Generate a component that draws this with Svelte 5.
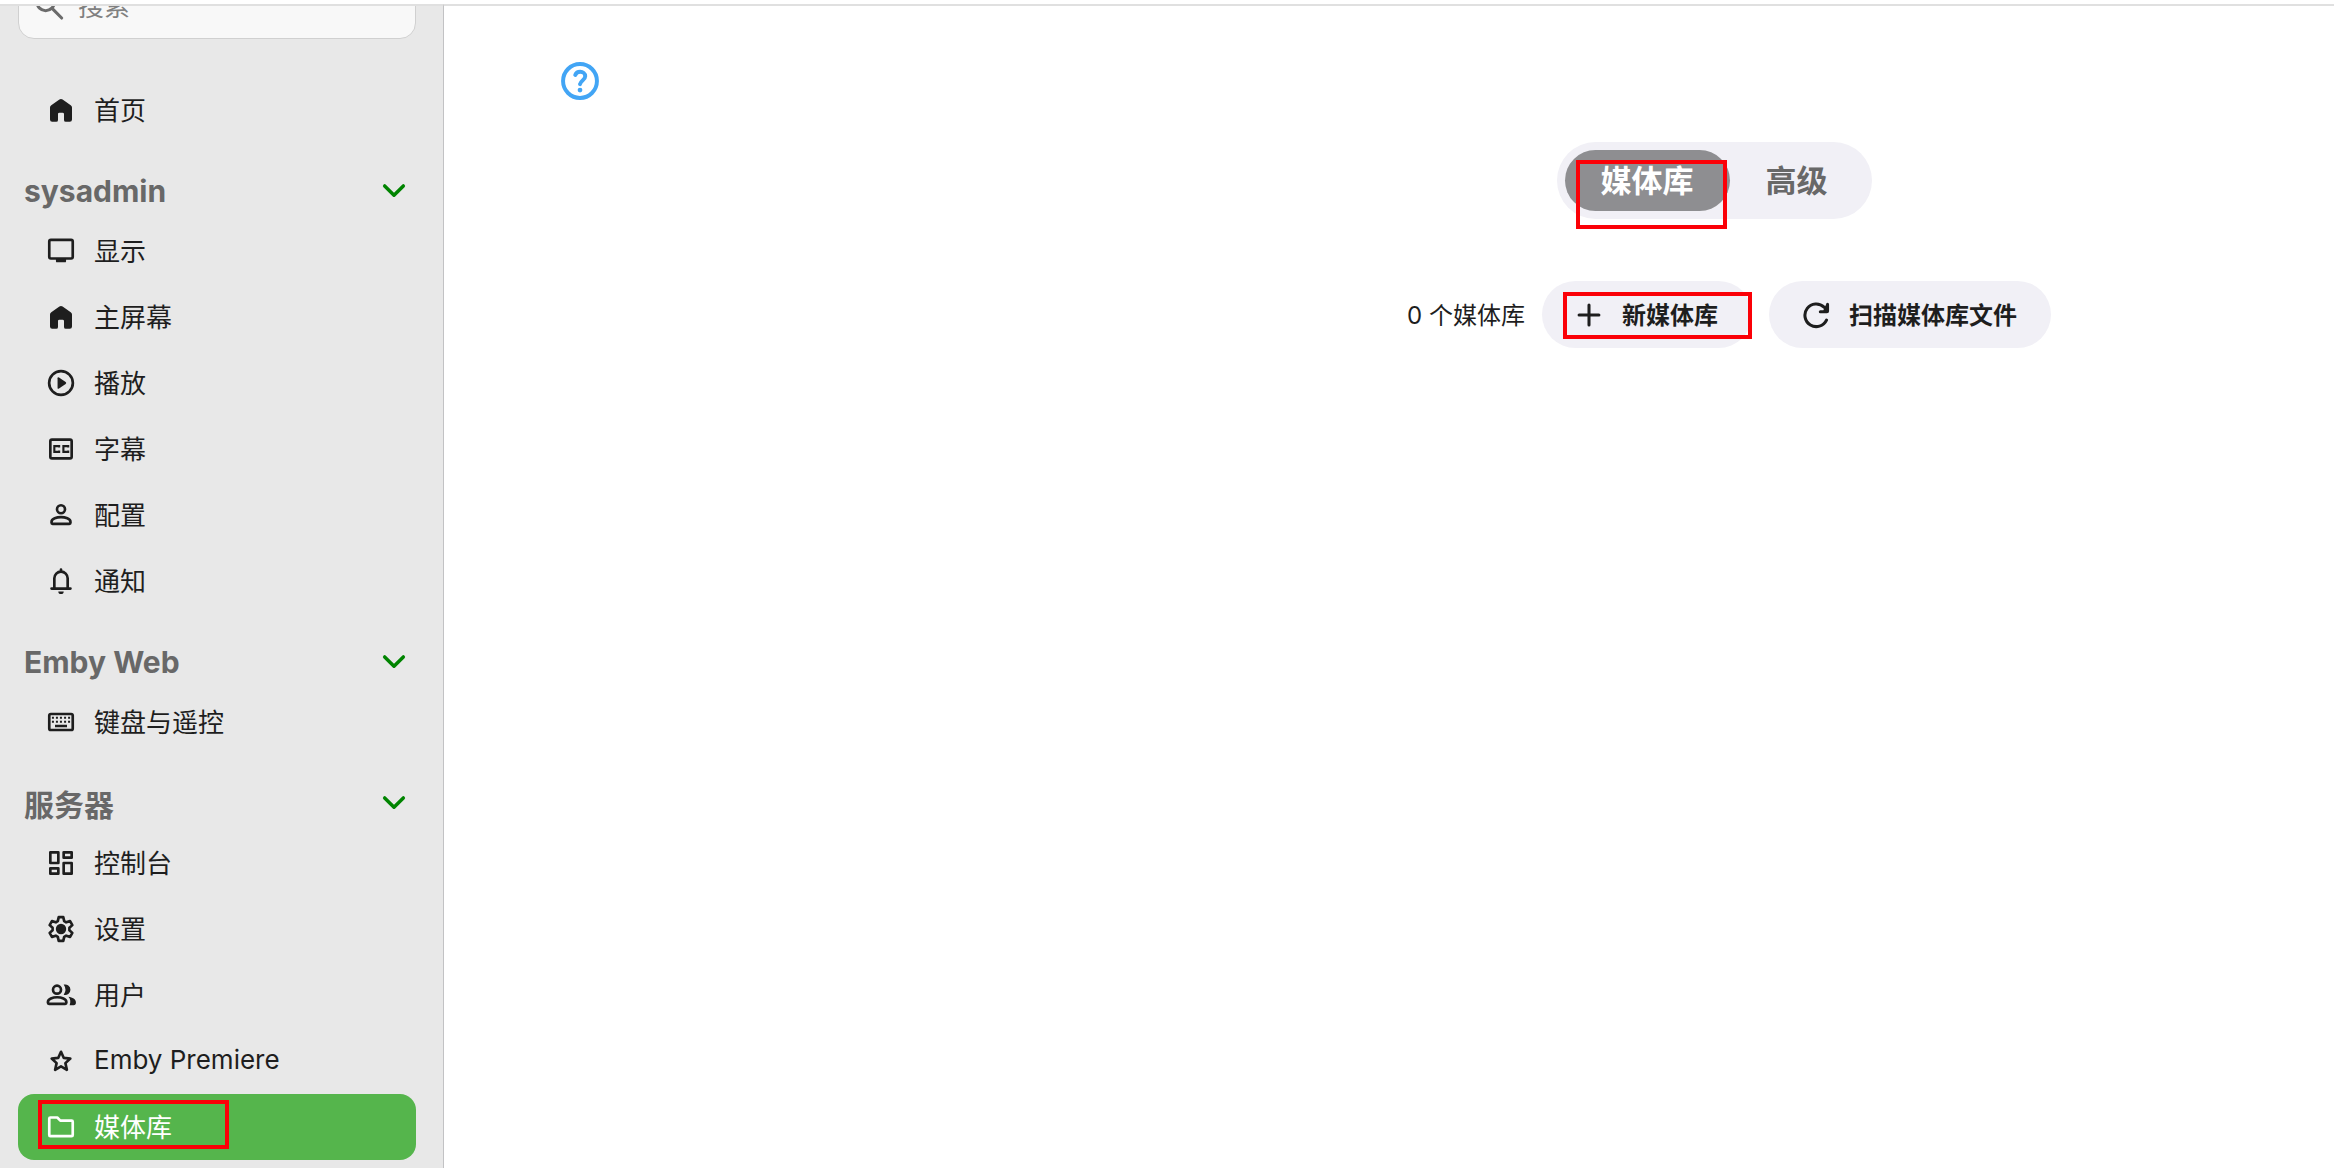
<script lang="ts">
  type Item = { label: string; icon: string; active?: boolean };

  const sections: Array<{ title: string; items: Item[] }> = [
    {
      title: 'sysadmin',
      items: [
        { label: '显示', icon: 'display' },
        { label: '主屏幕', icon: 'home' },
        { label: '播放', icon: 'play' },
        { label: '字幕', icon: 'captions' },
        { label: '配置', icon: 'person' },
        { label: '通知', icon: 'bell' }
      ]
    },
    {
      title: 'Emby Web',
      items: [{ label: '键盘与遥控', icon: 'keyboard' }]
    },
    {
      title: '服务器',
      items: [
        { label: '控制台', icon: 'dashboard' },
        { label: '设置', icon: 'settings' },
        { label: '用户', icon: 'group' },
        { label: 'Emby Premiere', icon: 'star' },
        { label: '媒体库', icon: 'folder', active: true }
      ]
    }
  ];

  let search = $state('');
  let tab = $state('媒体库');
  let collapsed: Record<string, boolean> = $state({});
</script>

{#snippet icon(name: string)}
  <svg class="icon" viewBox="0 0 24 24" aria-hidden="true">
    {#if name === 'home'}
      <path class="solid" d="M3.75 10.2Q3.75 9.1 4.7 8.4L10.8 4.1Q12 3.4 13.2 4.1L19.3 8.4Q20.25 9.1 20.25 10.2V19.2Q20.25 20.9 18.6 20.9H15.6Q14.25 20.9 14.25 19.5V15Q14.25 14 13.2 14H10.8Q9.75 14 9.75 15V19.5Q9.75 20.9 8.4 20.9H5.4Q3.75 20.9 3.75 19.2Z" />
    {:else if name === 'display'}
      <rect x="3.2" y="3.6" width="17.6" height="14" rx="1.2" />
      <path class="solid" d="M8.2 18h7.6v1.6q0 .9-.9.9H9.1q-.9 0-.9-.9z" />
    {:else if name === 'play'}
      <circle cx="12" cy="12" r="8.9" />
      <path class="solid" d="M9.4 8.500q0-1.300 1.100-.7l5 3.400q.9.800 0 1.600l-5 3.400q-1.100.6-1.100-.7z" />
    {:else if name === 'captions'}
      <rect x="4" y="5" width="16" height="14" rx="1.2" />
      <path class="thin" d="M10.600 10.800V9.800H7v4.400h3.600v-1M17.400 10.800V9.800h-3.600v4.400h3.600v-1" />
    {:else if name === 'person'}
      <circle cx="12" cy="7.7" r="3" />
      <path d="M4.900 17.200c0-2.400 4-3.600 7.100-3.600s7.100 1.200 7.100 3.600v.6q0 .8-.8.800H5.700q-.8 0-.8-.8z" />
    {:else if name === 'bell'}
      <path d="M4.900 17.700h14.200M7 17.400V10a5 5 0 0 1 10 0v7.400M12 3.400v1" />
      <path class="solid" d="M10 19.800h4a2 2 0 0 1-4 0z" />
    {:else if name === 'keyboard'}
      <rect x="3.2" y="6" width="17.600" height="12" rx="1.2" />
      <path class="solid" d="M5.200 8h1.500v1.500H5.200zM8.200 8h1.500v1.500H8.200zM11.200 8h1.500v1.500h-1.500zM14.300 8h1.500v1.500h-1.500zM17.300 8h1.500v1.500h-1.500zM5.200 11h1.500v1.500H5.200zM8.200 11h1.500v1.500H8.200zM11.200 11h1.500v1.500h-1.500zM14.300 11h1.500v1.500h-1.500zM17.300 11h1.500v1.500h-1.500zM7.500 14h9v1.900h-9z" />
    {:else if name === 'dashboard'}
      <path d="M4 4h6v8H4zM14 4h6v4h-6zM14 12h6v8h-6zM4 16h6v4H4z" />
    {:else if name === 'settings'}
      <path d="M10.300 3.100h3.400l.7 3 1.500.9 2.900-.9 1.700 3-2.200 2v1.800l2.200 2-1.700 3-2.900-.9-1.500.9-.7 3h-3.400l-.7-3-1.500-.9-2.900.9-1.700-3 2.200-2v-1.800l-2.200-2 1.700-3 2.900.9 1.500-.9z" />
      <circle class="solid" cx="12" cy="12" r="3.900" />
    {:else if name === 'group'}
      <circle cx="9" cy="8" r="3" />
      <path d="M2.200 17.200c0-2.200 3.600-3.500 6.900-3.500s6.900 1.300 6.900 3.500v.7q0 .8-.8.800H3q-.8 0-.8-.8z" />
      <path class="solid" d="M14 4.200a4 4 0 1 1 0 7.700q2.700-3.800 0-7.700zM17.600 13.400c3 .5 5.600 1.800 5.600 4.200 0 1.300-.6 2-1.700 2h-3c.9-2.300.6-4.700-.9-6.200z" />
    {:else if name === 'star'}
      <path d="M12 5.100l2.100 4.600 4.900.5-3.700 3.400 1.100 5-4.400-2.600-4.400 2.600 1.100-5L5 10.200l4.900-.5z" />
    {:else if name === 'folder'}
      <path d="M3.200 18V5.700q0-.8.800-.8h5.200l2.300 2.300h8.500q.8 0 .8.8v10q0 .9-.8.900H4q-.8 0-.8-.9z" />
    {:else if name === 'search'}
      <circle cx="9.500" cy="9" r="6.500" />
      <path d="M14.500 14l7 7" />
    {:else if name === 'chevron'}
      <path class="bold" d="M5 8.200l7 7 7-7" />
    {:else if name === 'add'}
      <path class="bold" d="M12 3.500v17M3.500 12h17" />
    {:else if name === 'refresh'}
      <path class="bold" d="M21 16.300A9.700 9.700 0 1 1 18.900 5.200L21 7.500" />
      <path class="solid" d="M20.600 3q0-1.400 1.300-1.400T23.200 3V8.700q0 1.800-1.800 1.800H15.700q-1.300 0-1.300-1.300t1.300-1.300h2.600z" />
    {:else if name === 'help'}
      <circle cx="12" cy="12" r="10.700" />
      <path d="M9 8.200C9.500 6.900 10.600 6.200 12.100 6.200c1.700 0 3.200 1 3.200 2.800 0 2.200-2.800 2.800-3.300 5" />
      <circle class="solid" cx="12" cy="17.700" r="1.500" />
    {/if}
  </svg>
{/snippet}

<div class="app">
  <aside class="sidebar">
    <label class="search">
      {@render icon('search')}
      <input type="text" placeholder="搜索" aria-label="搜索" bind:value={search} />
    </label>

    <nav>
      <a class="item" href="#home">
        {@render icon('home')}
        <span>首页</span>
      </a>

      {#each sections as section}
        <button
          class="section-title"
          aria-expanded={!collapsed[section.title]}
          onclick={() => (collapsed[section.title] = !collapsed[section.title])}
        >
          <span>{section.title}</span>
          {@render icon('chevron')}
        </button>
        {#if !collapsed[section.title]}
          {#each section.items as item}
            <a class="item" class:active={item.active} href="#{item.icon}">
              {@render icon(item.icon)}
              <span>{item.label}</span>
              {#if item.active}
                <i class="mark mark-nav"></i>
              {/if}
            </a>
          {/each}
        {/if}
      {/each}
    </nav>
  </aside>

  <main>
    <div class="content">
      <button class="help" aria-label="帮助">{@render icon('help')}</button>

      <div class="tabs">
        {#each ['媒体库', '高级'] as name}
          <button class="tab" class:selected={tab === name} onclick={() => (tab = name)}>{name}</button>
        {/each}
        <i class="mark mark-tab"></i>
      </div>

      <div class="toolbar">
        <span class="count">0 个媒体库</span>
        <button class="action">
          {@render icon('add')}
          <span>新媒体库</span>
          <i class="mark mark-add"></i>
        </button>
        <button class="action">
          {@render icon('refresh')}
          <span>扫描媒体库文件</span>
        </button>
      </div>
    </div>
  </main>
</div>

<style>
  :global(body) {
    background: #fff;
  }

  .app {
    box-sizing: border-box;
    display: flex;
    height: 100vh;
    padding-top: 4px;
    overflow: hidden;
    color: #1e1e1e;
    font-family: Inter, 'Noto Sans CJK SC', sans-serif;
    font-size: 26px;
  }

  button {
    padding: 0;
    border: none;
    background: none;
    color: inherit;
    font: inherit;
    cursor: pointer;
  }

  .icon {
    flex: none;
    width: 32px;
    height: 32px;
    fill: none;
    stroke: currentColor;
    stroke-width: 2;
    stroke-linecap: round;
    stroke-linejoin: round;
  }

  .icon .solid {
    fill: currentColor;
    stroke: none;
  }

  .icon .thin {
    stroke-width: 1.6;
    stroke-linecap: butt;
    stroke-linejoin: miter;
  }

  .icon .bold {
    stroke-width: 2.6;
  }

  /* sidebar */
  .sidebar {
    box-sizing: border-box;
    flex: none;
    width: 444px;
    padding: 0 27px 0 18px;
    border-top: 2px solid #e0e0e0;
    border-right: 1px solid #c2c2c4;
    background: #e8e8e8;
    overflow: hidden;
  }

  .search {
    box-sizing: border-box;
    display: flex;
    align-items: center;
    gap: 13px;
    height: 66px;
    margin-top: -33px;
    padding: 0 14px;
    border: 1px solid #d0d0d0;
    border-radius: 16px;
    background: #f8f8f8;
    color: #6b6b6b;
  }

  .search .icon {
    stroke-width: 2.3;
  }

  .search input {
    flex: 1;
    min-width: 0;
    padding: 0;
    border: none;
    outline: none;
    background: none;
    color: #1e1e1e;
    font: inherit;
  }

  .search input::placeholder {
    color: #808080;
    opacity: 1;
  }

  nav {
    display: flex;
    flex-direction: column;
    padding-top: 38px;
  }

  .item {
    position: relative;
    display: flex;
    align-items: center;
    gap: 17px;
    height: 66px;
    padding-left: 27px;
    border-radius: 16px;
    color: inherit;
    text-decoration: none;
  }

  /* the CJK glyphs sit low in the line box */
  .item span,
  .action span,
  .count {
    padding-bottom: 3px;
  }

  .item.active {
    background: #55b54c;
    color: #fff;
  }

  .section-title {
    box-sizing: border-box;
    display: flex;
    align-items: center;
    justify-content: space-between;
    height: 75px;
    padding: 20px 6px 0;
    color: #686868;
    font-size: 30px;
    font-weight: 700;
  }

  .section-title .icon {
    color: #008400;
  }

  /* content */
  main {
    flex: 1;
    min-width: 0;
    border-top: 2px solid #e0e0e0;
    overflow: hidden;
  }

  .content {
    display: flex;
    flex-direction: column;
    align-items: center;
    width: calc(100% + 650px);
    padding-top: 56px;
  }

  .help {
    align-self: flex-start;
    display: flex;
    margin-left: 117px;
    color: #42a5f5;
  }

  .help .icon {
    width: 38px;
    height: 38px;
    stroke-width: 2.5;
  }

  .tabs {
    position: relative;
    display: flex;
    margin-top: 42px;
    padding: 8px;
    border-radius: 40px;
    background: #f1f0f6;
  }

  .tab {
    height: 61px;
    padding: 0 36px 4px;
    border-radius: 32px;
    color: #686868;
    font-size: 31px;
    font-weight: 600;
  }

  .tab.selected {
    background: #8e8e91;
    color: #fff;
  }

  .toolbar {
    display: flex;
    align-items: center;
    gap: 17px;
    margin-top: 62px;
    padding-left: 30px;
    font-size: 24px;
  }

  .action {
    position: relative;
    display: flex;
    align-items: center;
    gap: 19px;
    height: 67px;
    padding: 0 34px 0 33px;
    border-radius: 34px;
    background: #f1f0f6;
    font-weight: 600;
  }

  .action .icon {
    width: 28px;
    height: 28px;
  }

  /* red annotation frames */
  .mark {
    position: absolute;
    box-sizing: border-box;
    border: 4px solid #fb0007;
    pointer-events: none;
  }

  .mark-nav {
    top: 6px;
    left: 20px;
    width: 191px;
    height: 49px;
  }

  .mark-tab {
    top: 18px;
    left: 19px;
    width: 151px;
    height: 69px;
  }

  .mark-add {
    top: 11px;
    left: 21px;
    width: 189px;
    height: 47px;
  }
</style>
